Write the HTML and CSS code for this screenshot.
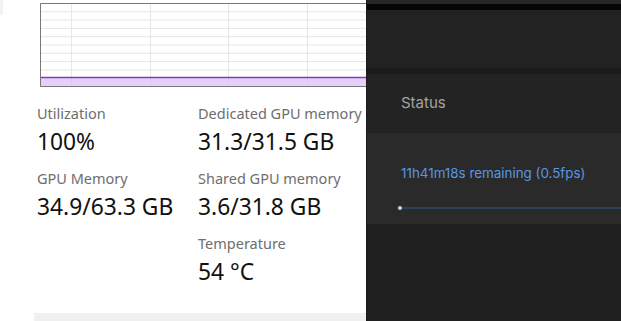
FILE: index.html
```html
<!DOCTYPE html>
<html>
<head>
<meta charset="utf-8">
<link rel="stylesheet" href="styles.css">
</head>
<body>
<div class="app">
  <div class="perf">
    <div class="corner"></div>
    <div class="chart-wrap">
      <svg class="chart" width="330" height="84" viewBox="0 0 330 84">
        <rect x="0" y="0" width="330" height="84" fill="#ffffff"/>
        <g stroke="#e6e6e6" stroke-width="1">
          <line x1="0" y1="8.8" x2="330" y2="8.8"/>
          <line x1="0" y1="17.1" x2="330" y2="17.1"/>
          <line x1="0" y1="25.4" x2="330" y2="25.4"/>
          <line x1="0" y1="33.7" x2="330" y2="33.7"/>
          <line x1="0" y1="42" x2="330" y2="42"/>
          <line x1="0" y1="50.3" x2="330" y2="50.3"/>
          <line x1="0" y1="58.6" x2="330" y2="58.6"/>
          <line x1="0" y1="66.9" x2="330" y2="66.9"/>
          <line x1="31.5" y1="0" x2="31.5" y2="84"/>
          <line x1="110.5" y1="0" x2="110.5" y2="84"/>
          <line x1="188.5" y1="0" x2="188.5" y2="84"/>
          <line x1="267.5" y1="0" x2="267.5" y2="84"/>
        </g>
        <rect x="0" y="74.5" width="330" height="9" fill="#e6d0fb"/>
        <g stroke="#ddc6f2" stroke-width="1">
          <line x1="31.5" y1="75" x2="31.5" y2="83"/>
          <line x1="110.5" y1="75" x2="110.5" y2="83"/>
          <line x1="188.5" y1="75" x2="188.5" y2="83"/>
          <line x1="267.5" y1="75" x2="267.5" y2="83"/>
        </g>
        <line x1="0" y1="74.5" x2="330" y2="74.5" stroke="#7b3dbb" stroke-width="1.5"/>
        <path d="M330 0.5 H0.5 V83.5 H330" fill="none" stroke="#777777" stroke-width="1"/>
      </svg>
    </div>
    <div class="stats">
      <div class="stat">
        <div class="label">Utilization</div>
        <div class="value">100%</div>
      </div>
      <div class="stat">
        <div class="label">Dedicated GPU memory</div>
        <div class="value">31.3/31.5 GB</div>
      </div>
      <div class="stat">
        <div class="label">GPU Memory</div>
        <div class="value">34.9/63.3 GB</div>
      </div>
      <div class="stat">
        <div class="label">Shared GPU memory</div>
        <div class="value">3.6/31.8 GB</div>
      </div>
      <div class="stat"></div>
      <div class="stat">
        <div class="label">Temperature</div>
        <div class="value">54 °C</div>
      </div>
    </div>
    <div class="footer-bar"></div>
  </div>
  <div class="side">
    <div class="strip-top"></div>
    <div class="strip-black"></div>
    <div class="header-area"></div>
    <div class="divider"></div>
    <div class="status-head">Status</div>
    <div class="status-card">
      <div class="remaining">11h41m18s remaining (0.5fps)</div>
      <div class="progress"><span class="progress-dot"></span></div>
    </div>
    <div class="rest"></div>
  </div>
</div>
</body>
</html>
```

FILE: styles.css
```css
html, body {
  margin: 0;
  padding: 0;
  height: 100%;
  overflow: hidden;
}
body {
  font-family: "Noto Sans", "Open Sans", sans-serif;
  background: #ffffff;
}
.app {
  display: flex;
  width: 621px;
  height: 321px;
}
.perf {
  width: 366px;
  flex: none;
  background: #ffffff;
  overflow: hidden;
  display: flex;
  flex-direction: column;
  position: relative;
}
.corner {
  position: absolute;
  left: 0;
  top: 0;
  width: 3px;
  height: 15px;
  background: #f3f3f3;
}
.chart-wrap {
  padding-top: 3px;
  padding-left: 40px;
  height: 84px;
  flex: none;
}
.chart {
  display: block;
}
.stats {
  display: grid;
  grid-template-columns: 161px 161px;
  row-gap: 12px;
  padding-left: 37px;
  padding-top: 16px;
}
.label {
  font-size: 14.5px;
  line-height: 20px;
  color: #6e6e6e;
  white-space: nowrap;
}
.value {
  font-size: 22.8px;
  line-height: 28px;
  margin-top: 5px;
  color: #111111;
  white-space: nowrap;
}
.footer-bar {
  margin-top: 27px;
  margin-left: 34px;
  flex: 1;
  background: #f0f0f0;
}
.side {
  flex: 1;
  display: flex;
  flex-direction: column;
  background: #1f1f1f;
  font-family: Inter, "Noto Sans", sans-serif;
  border-left: 1px solid #1a1a1a;
}
.strip-top {
  height: 4px;
  background: #262626;
}
.strip-black {
  height: 6px;
  background: #050505;
}
.header-area {
  height: 58px;
  background: #222222;
}
.divider {
  height: 6px;
  background: #1b1b1b;
}
.status-head {
  height: 59px;
  box-sizing: border-box;
  padding: 20px 0 0 34px;
  font-size: 15px;
  line-height: 17px;
  color: #a3a3a3;
  background: #232323;
}
.status-card {
  height: 91px;
  box-sizing: border-box;
  background: #2a2a2a;
  padding: 32px 0 0 34px;
}
.remaining {
  font-size: 13.4px;
  line-height: 16px;
  color: #5b96e0;
  white-space: nowrap;
}
.progress {
  margin-top: 26px;
  margin-left: -4px;
  height: 2px;
  background: #2c4258;
  position: relative;
}
.progress-dot {
  position: absolute;
  left: 1px;
  top: -1px;
  width: 4px;
  height: 4px;
  border-radius: 2px;
  background: #b9d4f5;
}
.rest {
  flex: 1;
  background: #1f1f1f;
}
```
